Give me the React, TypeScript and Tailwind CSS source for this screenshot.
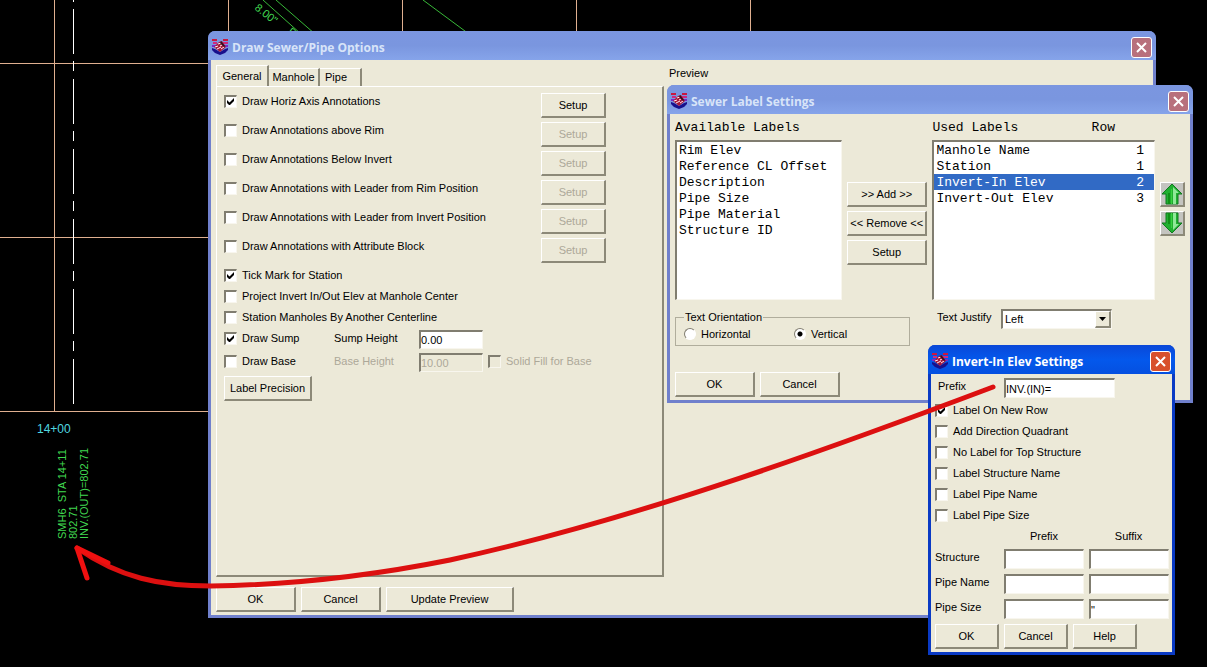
import { useState } from 'react';
import type { ReactNode } from 'react';
import clsx from 'clsx';

function AppIcon() {
  return (
    <svg width="16" height="16" viewBox="0 0 16 16" className="shrink-0">
      <path d="M0 0h5v2H0zM11 0h5v2h-5z" fill="#c81840" />
      <path d="M1 3h4v2H1zM11 3h5v2h-5z" fill="#d02880" />
      <path d="M0 6h4v2H0zM12 6h4v2h-4z" fill="#7a28c8" />
      <path d="M0 9l3 1 5 3 5-3 3-1v2l-3 3-5 2-5-2-3-3z" fill="#18108c" />
      <path d="M2 8l5-5 3-1 4 6-6 5z" fill="#a81838" />
      <path d="M3 8l3-1M5 10l4-2M6 5l3-1M9 10l3-2M8 7l2-1" stroke="#ffe8f0" strokeWidth="1" />
      <path d="M9 2l4 5-1 1-4-4z" fill="#301020" />
    </svg>
  );
}

type DialogProps = {
  title: string;
  active?: boolean;
  className: string;
  children: ReactNode;
};

function Dialog({ title, active, className, children }: DialogProps) {
  return (
    <section
      aria-label={title}
      className={clsx(
        'absolute flex flex-col rounded-t-[7px] border-x-3 border-b-3',
        active ? 'border-[#0a3ac4] bg-[#0a3ac4]' : 'border-[#7080cc] bg-[#7080cc]',
        className,
      )}
    >
      <header
        className={clsx(
          '-mx-[3px] flex h-[29px] shrink-0 items-center gap-1 rounded-t-[7px] px-1 pt-[3px]',
          active
            ? 'bg-linear-to-b from-[#0a48d8] via-[#0458ec] to-[#0550e0]'
            : 'bg-linear-to-b from-[#7b96e0] via-[#7a96df] to-[#86a4ea]',
        )}
      >
        <AppIcon />
        <h2
          className={clsx(
            "flex-1 font-['Open_Sans'] text-[12px] font-bold whitespace-nowrap",
            active ? 'text-white' : 'text-[#d8e4f8]',
          )}
        >
          {title}
        </h2>
        <button
          aria-label="Close"
          className={clsx(
            'flex size-[21px] items-center justify-center rounded-[3px] border border-white',
            active ? 'bg-[#d8502c]' : 'bg-[#b8707c]',
          )}
        >
          <svg width="13" height="13" viewBox="0 0 13 13">
            <path d="M2 2l9 9M11 2l-9 9" stroke="#fff" strokeWidth="2" />
          </svg>
        </button>
      </header>
      <div className="flex-1 bg-[#ece9d8]">{children}</div>
    </section>
  );
}

function Button({ children, className, disabled }: { children: ReactNode; className?: string; disabled?: boolean }) {
  return (
    <button
      disabled={disabled}
      className={clsx(
        'h-[25px] border-t border-r-2 border-b-2 border-l border-t-white border-r-[#8c8978] border-b-[#8c8978] border-l-white bg-[#ece9d8] whitespace-nowrap disabled:text-[#aca899]',
        className,
      )}
    >
      {children}
    </button>
  );
}

type CheckProps = { label: string; checked?: boolean; disabled?: boolean; className?: string };

function Check({ label, checked, disabled, className }: CheckProps) {
  return (
    <label
      className={clsx('flex h-[17px] items-center gap-[5px] whitespace-nowrap', disabled && 'text-[#aca899]', className)}
    >
      <span className="grid size-[13px] shrink-0">
        <input
          type="checkbox"
          defaultChecked={checked}
          disabled={disabled}
          className="peer col-start-1 row-start-1 size-[13px] appearance-none border-t-2 border-r border-b border-l-2 border-t-[#807d70] border-r-[#f8f6ee] border-b-[#f8f6ee] border-l-[#807d70] bg-white disabled:bg-[#ece9d8]"
        />
        <svg
          viewBox="0 0 13 13"
          className="pointer-events-none invisible col-start-1 row-start-1 size-[13px] peer-checked:visible"
        >
          <path d="M3 5v3l2 2h1l4-4V3L5.500 7.500z" fill="#000" />
        </svg>
      </span>
      <span className="leading-[19px]">{label}</span>
    </label>
  );
}

type FieldProps = { label: string; value?: string; disabled?: boolean; className?: string };

function Field({ label, value = '', disabled, className }: FieldProps) {
  return (
    <input
      type="text"
      aria-label={label}
      defaultValue={value}
      disabled={disabled}
      className={clsx(
        'min-w-0 border-t-2 border-r border-b border-l-2 border-t-[#807d70] border-r-[#f8f6ee] border-b-[#f8f6ee] border-l-[#807d70] bg-white disabled:bg-[#ece9d8] disabled:text-[#aca899]',
        className,
      )}
    />
  );
}

function ListBox({ label, items, initial = '' }: { label: string; items: [string, string?][]; initial?: string }) {
  const [selected, setSelected] = useState(initial);

  return (
    <ul
      role="listbox"
      aria-label={label}
      className="h-40 border-t-2 border-r border-b border-l-2 border-t-[#807d70] border-r-[#f8f6ee] border-b-[#f8f6ee] border-l-[#807d70] bg-white font-['Liberation_Mono'] text-[13px] leading-[18px]"
    >
      {items.map(([name, row]) => (
        <li
          key={name}
          role="option"
          aria-selected={selected === name}
          onClick={() => setSelected(name)}
          className={clsx(
            'flex h-4 justify-between pr-2.5 pl-0.5 whitespace-nowrap',
            selected === name && 'bg-[#316ac5] text-white',
          )}
        >
          <span>{name}</span>
          {row && <span>{row}</span>}
        </li>
      ))}
    </ul>
  );
}

const annotations = [
  'Draw Horiz Axis Annotations',
  'Draw Annotations above Rim',
  'Draw Annotations Below Invert',
  'Draw Annotations with Leader from Rim Position',
  'Draw Annotations with Leader from Invert Position',
  'Draw Annotations with Attribute Block',
];

function PipeOptions() {
  const tab = 'border-t border-r-2 border-t-white border-r-[#8c8978] bg-[#ece9d8]';

  return (
    <Dialog title="Draw Sewer/Pipe Options" className="top-[31px] left-[208px] w-[948px]">
      <div className="flex gap-[5px] px-[5px] pt-[5px]">
        <div className="w-[448px]">
          <div role="tablist" className="flex h-[21px] items-end">
            <button role="tab" aria-selected="true" className={clsx(tab, 'h-[21px] w-[53px] border-l border-l-white')}>
              General
            </button>
            <button role="tab" aria-selected="false" className={clsx(tab, 'h-[18px] w-[51px]')}>
              Manhole
            </button>
            <button role="tab" aria-selected="false" className={clsx(tab, 'h-[18px] w-[42px] pr-2')}>
              Pipe
            </button>
          </div>
          <div className="flex h-[491px] flex-col gap-1 border-t border-r-2 border-b-2 border-l border-t-white border-r-[#8c8978] border-b-[#8c8978] border-l-white px-[7px] pt-1.5">
            {annotations.map((label, i) => (
              <div key={label} className="flex w-[382px] items-start justify-between">
                <Check label={label} checked={i === 0} />
                <Button className="w-[65px]" disabled={i > 0}>
                  Setup
                </Button>
              </div>
            ))}
            <Check label="Tick Mark for Station" checked />
            <Check label="Project Invert In/Out Elev at Manhole Center" />
            <Check label="Station Manholes By Another Centerline" />
            <div className="flex h-[19px]">
              <Check label="Draw Sump" checked className="w-[110px]" />
              <span className="w-[85px]">Sump Height</span>
              <Field label="Sump Height" value="0.00" className="w-16" />
            </div>
            <div className="flex h-[19px]">
              <Check label="Draw Base" className="w-[110px]" />
              <span className="w-[85px] text-[#aca899]">Base Height</span>
              <Field label="Base Height" value="10.00" disabled className="w-16" />
              <Check label="Solid Fill for Base" disabled className="ml-[5px]" />
            </div>
            <Button className="w-[88px]">Label Precision</Button>
          </div>
        </div>
        <p>Preview</p>
      </div>
      <div className="flex gap-[5px] px-[5px] pt-2.5 pb-[3px]">
        <Button className="w-20">OK</Button>
        <Button className="w-20">Cancel</Button>
        <Button className="w-32">Update Preview</Button>
      </div>
    </Dialog>
  );
}

function GreenArrow({ down }: { down?: boolean }) {
  return (
    <button
      aria-label={down ? 'Move down' : 'Move up'}
      className="h-[25px] w-[25px] border-t border-r-2 border-b-2 border-l border-t-white border-r-[#8c8978] border-b-[#8c8978] border-l-white bg-[#c4c4c0]"
    >
      <svg viewBox="0 0 22 22" className={clsx('size-[22px]', down && '-scale-y-100')}>
        <path d="M11 1l10 10h-4v10H5V11H1z" fill="#20b030" stroke="#107820" />
        <path d="M12 4l6 6h-3v11h-3z" fill="#90e898" />
        <path d="M7 10h2v11H7z" fill="#109018" />
        <path d="M10 6h1v15h-1z" fill="#38d040" />
      </svg>
    </button>
  );
}

function LabelSettings() {
  return (
    <Dialog title="Sewer Label Settings" className="top-[85px] left-[667px] w-[526px]">
      <div className="px-[5px] pt-[5px] pb-[3px]">
        <div className="flex gap-[5px]">
          <div className="w-[168px]">
            <h3 className="h-[21px] font-['Liberation_Mono'] text-[13px] leading-[18px]">Available Labels</h3>
            <ListBox
              label="Available Labels"
              items={[
                ['Rim Elev'],
                ['Reference CL Offset'],
                ['Description'],
                ['Pipe Size'],
                ['Pipe Material'],
                ['Structure ID'],
              ]}
            />
          </div>
          <div className="flex w-[81px] flex-col gap-1 pt-[63px]">
            <Button>&gt;&gt; Add &gt;&gt;</Button>
            <Button>&lt;&lt; Remove &lt;&lt;</Button>
            <Button>Setup</Button>
          </div>
          <div className="w-[224px]">
            <h3 className="flex h-[21px] justify-between pr-10 font-['Liberation_Mono'] text-[13px] leading-[18px]">
              <span>Used Labels</span>
              <span>Row</span>
            </h3>
            <ListBox
              label="Used Labels"
              initial="Invert-In Elev"
              items={[
                ['Manhole Name', '1'],
                ['Station', '1'],
                ['Invert-In Elev', '2'],
                ['Invert-Out Elev', '3'],
              ]}
            />
          </div>
          <div className="flex flex-col gap-1 pt-[63px]">
            <GreenArrow />
            <GreenArrow down />
          </div>
        </div>
        <div className="flex pt-[9px]">
          <fieldset className="mr-[27px] h-[37px] w-[235px] border border-[#b0ad9c] px-2">
            <legend className="px-px leading-4">Text Orientation</legend>
            <div className="flex">
              {['Horizontal', 'Vertical'].map((name) => (
                <label key={name} className="flex w-[110px] items-center gap-[5px] leading-[18px] last:w-auto">
                  <input
                    type="radio"
                    name="orientation"
                    defaultChecked={name === 'Vertical'}
                    className="size-3 appearance-none rounded-full border border-t-[#807d70] border-r-white border-b-white border-l-[#807d70] bg-white checked:bg-[radial-gradient(circle,#000_2px,#fff_3px)]"
                  />
                  {name}
                </label>
              ))}
            </div>
          </fieldset>
          <label htmlFor="justify" className="w-16">
            Text Justify
          </label>
          <span className="grid h-5 w-[111px] border-t-2 border-r border-b border-l-2 border-t-[#807d70] border-r-[#f8f6ee] border-b-[#f8f6ee] border-l-[#807d70] bg-white">
            <select id="justify" className="col-start-1 row-start-1 appearance-none pl-0.5">
              <option>Left</option>
              <option>Center</option>
              <option>Right</option>
            </select>
            <span className="pointer-events-none col-start-1 row-start-1 flex w-4 items-center justify-center justify-self-end border-t border-r-2 border-b-2 border-l border-t-white border-r-[#8c8978] border-b-[#8c8978] border-l-white bg-[#ece9d8]">
              <svg width="7" height="4" viewBox="0 0 7 4">
                <path d="M0 0h7L3.500 4z" />
              </svg>
            </span>
          </span>
        </div>
        <div className="flex gap-[5px] pt-[26px]">
          <Button className="w-20">OK</Button>
          <Button className="w-20">Cancel</Button>
        </div>
      </div>
    </Dialog>
  );
}

function InvertSettings() {
  const rows = ['Structure', 'Pipe Name', 'Pipe Size'];
  const flags = [
    'Label On New Row',
    'Add Direction Quadrant',
    'No Label for Top Structure',
    'Label Structure Name',
    'Label Pipe Name',
    'Label Pipe Size',
  ];

  return (
    <Dialog title="Invert-In Elev Settings" active className="top-[345px] left-[928px] w-[247px]">
      <div className="px-1 pt-1 pb-[3px]">
        <div className="flex h-6">
          <span className="w-[69px] pl-[3px]">Prefix</span>
          <Field label="Prefix" value="INV.(IN)=" className="h-5 w-[111px]" />
        </div>
        <div className="flex flex-col gap-1">
          {flags.map((label, i) => (
            <Check key={label} label={label} checked={i === 0} />
          ))}
        </div>
        <table className="w-full table-fixed">
          <thead>
            <tr className="h-[25px]">
              <td className="w-[69px]" />
              <th className="w-[85px] pr-[5px] font-normal">Prefix</th>
              <th className="font-normal">Suffix</th>
            </tr>
          </thead>
          <tbody>
            {rows.map((name) => (
              <tr key={name} className="h-[25px]">
                <th className="pb-2 text-left font-normal whitespace-nowrap">{name}</th>
                <td className="align-top">
                  <Field label={name + ' prefix'} className="block h-5 w-20" />
                </td>
                <td className="align-top">
                  <Field label={name + ' suffix'} value={name === 'Pipe Size' ? '"' : ''} className="block h-5 w-20" />
                </td>
              </tr>
            ))}
          </tbody>
        </table>
        <div className="flex gap-[5px]">
          <Button className="w-16">OK</Button>
          <Button className="w-16">Cancel</Button>
          <Button className="w-16">Help</Button>
        </div>
      </div>
    </Dialog>
  );
}

function Drawing() {
  return (
    <svg width="1207" height="667" className="absolute top-0 left-0 font-['Liberation_Sans'] text-[11px]">
      <path
        d="M54.500 0v411M228.500 0v411M402.500 0v411M576.500 0v411M750.500 0v411M0 63.500h700M0 237.500h700M0 411.500h700"
        stroke="#e0b090"
      />
      <path d="M73.500 9v402" stroke="#fff" strokeDasharray="45 7 10 8" />
      <path d="M73.500 0v2" stroke="#fff" />
      <path d="M263 0l38 34M276 0l39 34M423 0l46 34" stroke="#38b838" fill="none" />
      <g fill="#40d850">
        <text transform="translate(254 9) rotate(38)">8.00&quot;</text>
        <text transform="translate(287 33) rotate(38)">P</text>
        <text transform="translate(66 539) rotate(-90)" xmlSpace="preserve">
          {'SMH6  STA 14+11'}
        </text>
        <text transform="translate(77 539) rotate(-90)">802.71</text>
        <text transform="translate(88 539) rotate(-90)">INV.(OUT)=802.71</text>
      </g>
      <text x="37" y="433" fontSize="12" fill="#50d8e0">
        14+00
      </text>
    </svg>
  );
}

export default function App() {
  return (
    <main className="relative h-screen w-full overflow-hidden bg-black font-['Liberation_Sans',sans-serif] text-[11px] leading-[17px] text-black">
      <Drawing />
      <PipeOptions />
      <LabelSettings />
      <InvertSettings />
      <svg
        width="1207"
        height="667"
        className="pointer-events-none absolute top-0 left-0"
        fill="none"
        stroke="#dc1010"
        strokeWidth="5"
        strokeLinecap="round"
        strokeLinejoin="round"
      >
        <path d="M993 387C850 441 640 519 450 560C370 576 290 585 211 586C160 586 120 578 77 548" />
        <path d="M108 563L77 548L87 578" stroke="#f01010" />
      </svg>
    </main>
  );
}
